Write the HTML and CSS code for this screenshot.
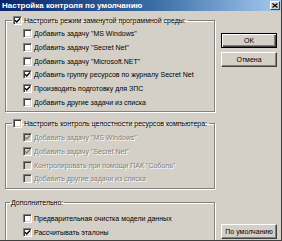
FILE: index.html
```html
<!DOCTYPE html>
<html>
<head>
<meta charset="utf-8">
<link rel="stylesheet" href="styles.css">
</head>
<body>
<div class="window">
  <div class="titlebar">
    <span class="title">Настройка контроля по умолчанию</span>
    <span class="close">
      <svg width="6" height="5" viewBox="0 0 6 5"><path d="M0.5 0.5 L5.5 4.5 M5.5 0.5 L0.5 4.5" stroke="#000" stroke-width="1.2"/></svg>
    </span>
  </div>
  <div class="content">
    <div class="groups">
      <fieldset class="group g1">
        <legend><span class="cb on"><svg viewBox="0 0 7 7"><path d="M1 3.2 L2.8 5 L6 1.6" /></svg></span>Настроить режим замкнутой программной среды:</legend>
        <div class="row"><span class="cb"></span>Добавить задачу "MS Windows"</div>
        <div class="row"><span class="cb"></span>Добавить задачу "Secret Net"</div>
        <div class="row"><span class="cb"></span>Добавить задачу "Microsoft.NET"</div>
        <div class="row"><span class="cb on"><svg viewBox="0 0 7 7"><path d="M1 3.2 L2.8 5 L6 1.6" /></svg></span>Добавить группу ресурсов по журналу Secret Net</div>
        <div class="row"><span class="cb on"><svg viewBox="0 0 7 7"><path d="M1 3.2 L2.8 5 L6 1.6" /></svg></span>Производить подготовку для ЗПС</div>
        <div class="row"><span class="cb"></span>Добавить другие задачи из списка</div>
      </fieldset>
      <fieldset class="group g2">
        <legend><span class="cb"></span>Настроить контроль целостности ресурсов компьютера:</legend>
        <div class="row dis"><span class="cb on"><svg viewBox="0 0 7 7"><path d="M1 3.2 L2.8 5 L6 1.6" /></svg></span>Добавить задачу "MS Windows"</div>
        <div class="row dis"><span class="cb on"><svg viewBox="0 0 7 7"><path d="M1 3.2 L2.8 5 L6 1.6" /></svg></span>Добавить задачу "Secret Net"</div>
        <div class="row dis"><span class="cb"></span>Контролировать при помощи ПАК "Соболь"</div>
        <div class="row dis"><span class="cb"></span>Добавить другие задачи из списка</div>
      </fieldset>
      <fieldset class="group g3">
        <legend class="plain">Дополнительно:</legend>
        <div class="row"><span class="cb"></span>Предварительная очистка модели данных</div>
        <div class="row"><span class="cb on"><svg viewBox="0 0 7 7"><path d="M1 3.2 L2.8 5 L6 1.6" /></svg></span>Рассчитывать эталоны</div>
      </fieldset>
    </div>
    <div class="buttons">
      <div class="btn-top">
        <div class="btn default"><span>OK</span></div>
        <div class="btn"><span>Отмена</span></div>
      </div>
      <div class="btn"><span>По умолчанию</span></div>
    </div>
  </div>
</div>
</body>
</html>
```

FILE: styles.css
```css
* { box-sizing: border-box; }
html, body { margin: 0; padding: 0; background: #d4d0c8; }
body {
  font-family: "Liberation Sans", Arial, sans-serif;
  font-size: 7px;
  color: #000;
}
.window {
  width: 282px;
  height: 241px;
  background: #d4d0c8;
  display: flex;
  flex-direction: column;
  border-right: 1px solid #404040;
  border-bottom: 1px solid #404040;
  overflow: hidden;
}
.titlebar {
  height: 11px;
  flex: none;
  background: linear-gradient(to right, #0a246a 0%, #3a6ea5 55%, #a6caf0 100%);
  display: flex;
  align-items: center;
  justify-content: space-between;
  padding: 0 1px 0 2px;
}
.title {
  color: #fff;
  font-weight: bold;
  font-size: 8px;
  line-height: 11px;
  white-space: nowrap;
}
.close {
  width: 10px;
  height: 9px;
  background: #d4d0c8;
  border: 1px solid;
  border-color: #fff #404040 #404040 #fff;
  display: flex;
  align-items: center;
  justify-content: center;
}
.content {
  display: flex;
  padding: 4px 0 0 5px;
  flex: 1;
}
.groups {
  width: 210px;
  flex: none;
  display: flex;
  flex-direction: column;
}
.group {
  margin: 0;
  padding: 2px 0 2px 0;
  min-width: 0;
  border: 1px solid #808080;
  box-shadow: inset 1px 1px #fff, 1px 1px #fff;
}
.g2 { margin-top: 7px; padding-top: 2px; }
.g3 { margin-top: 9px; padding-top: 4px; padding-bottom: 3px; }
legend {
  margin-left: 6px;
  padding: 0 2px 0 1px;
  height: 10px;
  display: flex;
  align-items: center;
  gap: 2px;
  white-space: nowrap;
}
legend.plain { margin-left: 4px; padding: 0 1px; }
.row {
  height: 13.67px;
  display: flex;
  align-items: center;
  gap: 2px;
  padding-left: 17px;
  white-space: nowrap;
}
.cb {
  width: 9px;
  height: 9px;
  flex: none;
  background: #fff;
  border: 1px solid;
  border-color: #808080 #fff #fff #808080;
  box-shadow: inset 1px 1px #404040, inset -1px -1px #d4d0c8;
  display: flex;
  align-items: center;
  justify-content: center;
}
.cb svg { width: 7px; height: 7px; display: block; }
.cb svg path { fill: none; stroke: #000; stroke-width: 1.4; }
.dis { color: #808080; text-shadow: 1px 1px 0 #fff; }
.dis .cb { background: #d4d0c8; }
.dis .cb svg path { stroke: #808080; }
.buttons {
  flex: 1;
  display: flex;
  flex-direction: column;
  justify-content: space-between;
  padding: 18px 4px 4px 6px;
}
.btn-top { display: flex; flex-direction: column; gap: 4px; }
.btn {
  height: 15px;
  width: 56px;
  border: 1px solid;
  border-color: #fff #404040 #404040 #fff;
  box-shadow: inset -1px -1px #808080;
  display: flex;
  align-items: center;
  justify-content: center;
  white-space: nowrap;
}
.btn.default {
  border: 1px solid #000;
  box-shadow: inset 1px 1px #fff, inset -1px -1px #404040, inset -2px -2px #808080;
}
```
